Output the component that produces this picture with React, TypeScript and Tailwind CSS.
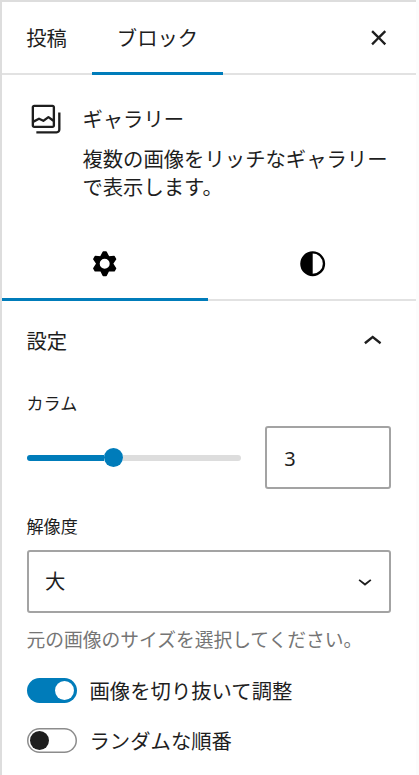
import { useState } from "react";
import type { ReactNode } from "react";
import clsx from "clsx";

const icons = {
    gallery: "M16.375 4.5H4.625a.125.125 0 0 0-.125.125v8.254l2.859-1.54a.75.75 0 0 1 .68-.016l2.384 1.142 2.89-2.074a.75.75 0 0 1 .874 0l2.313 1.66V4.625a.125.125 0 0 0-.125-.125Zm.125 9.398-2.75-1.975-2.813 2.02a.75.75 0 0 1-.76.067l-2.444-1.17L4.5 14.583v1.792c0 .069.056.125.125.125h11.75a.125.125 0 0 0 .125-.125v-2.477ZM4.625 3C3.728 3 3 3.728 3 4.625v11.75C3 17.273 3.728 18 4.625 18h11.75c.898 0 1.625-.727 1.625-1.625V4.625C18 3.728 17.273 3 16.375 3H4.625ZM20 8v11c0 .69-.31 1-.999 1H6v1.5h13.001c1.52 0 2.499-.982 2.499-2.5V8H20Z",
    cog: "M11.1 4.5h1.8l1.6 3.17 3.55-.2.9 1.56L17 12l1.95 2.97-.9 1.56-3.55-.2-1.6 3.17h-1.8l-1.6-3.17-3.55.2-.9-1.56L7 12 5.05 9.03l.9-1.56 3.55.2zM15.7 12a3.7 3.7 0 1 1-7.4 0 3.7 3.7 0 0 1 7.4 0z",
    styles: "M20 12a8 8 0 1 1-16 0 8 8 0 0 1 16 0Zm-1.5 0a6.5 6.5 0 0 1-6.5 6.5v-13a6.5 6.5 0 0 1 6.5 6.5Z",
    close: "M12 13.06l3.712 3.713 1.061-1.06L13.061 12l3.712-3.712-1.06-1.06L12 10.938 8.288 7.227l-1.061 1.06L10.939 12l-3.712 3.712 1.06 1.061L12 13.061z",
    up: "M6.5 12.4L12 8l5.5 4.4-.9 1.2L12 10l-4.5 3.6-1-1.2z",
    down: "M17.5 11.6L12 16l-5.5-4.4.9-1.2L12 14l4.5-3.6 1 1.2z",
};

function Icon({ name, className }: { name: keyof typeof icons; className: string }) {
    return (
        <svg viewBox="0 0 24 24" className={clsx("shrink-0 fill-current", className)} aria-hidden="true">
            <path fillRule="evenodd" clipRule="evenodd" d={icons[name]} />
        </svg>
    );
}

function Toggle({ on, onChange, children }: { on: boolean; onChange: () => void; children: ReactNode }) {
    return (
        <button role="switch" aria-checked={on} onClick={onChange} className="flex h-[25px] items-center gap-[13px] text-left">
            <span
                className={clsx(
                    "flex h-[25px] w-[50px] items-center rounded-full px-[3px]",
                    on ? "justify-end bg-[#007cba]" : "bg-white inset-ring-[1.5px] inset-ring-[#8c8c8c]"
                )}
            >
                <span className={clsx("size-[19px] rounded-full", on ? "bg-white" : "bg-[#1e1e1e]")} />
            </span>
            <span className="pb-[2px]">{children}</span>
        </button>
    );
}

export default function App() {
    const [crop, setCrop] = useState(true);
    const [random, setRandom] = useState(false);

    return (
        <div className="h-[775px] w-[419px] overflow-hidden bg-[#fcfcfc] pr-[3px] font-['Noto_Sans_CJK_JP',sans-serif] text-[20.35px] leading-[28px] text-[#1e1e1e]">
            <div className="h-full border-t-2 border-l-2 border-[#dddddd] bg-white">
                {/* Tabs */}
                <div className="flex h-[73px] inset-shadow-[0_-2px_0_#e2e2e2]">
                    <button className="w-[90px] pr-[1px] pb-[3px]">投稿</button>
                    <button className="w-[131px] pb-[3px] inset-shadow-[0_-3px_0_#007cba]">ブロック</button>
                    <button className="ml-auto pr-[19px] pb-[2px]" aria-label="閉じる">
                        <Icon name="close" className="size-[37.4px]" />
                    </button>
                </div>

                {/* Block card */}
                <div className="flex h-[145px] gap-[18.5px] pt-[25px] pl-[24.5px]">
                    <Icon name="gallery" className="size-[37.4px]" />
                    <div className="pt-[4px]">
                        <h2>ギャラリー</h2>
                        <p className="mt-[12px] w-[308px]">複数の画像をリッチなギャラリーで表示します。</p>
                    </div>
                </div>

                {/* Settings / styles */}
                <div className="grid h-[81px] grid-cols-[206px_208px] text-black inset-shadow-[0_-2px_0_#e2e2e2]">
                    <button className="flex items-center justify-center pt-[7px] inset-shadow-[0_-3px_0_#007cba]" aria-label="設定">
                        <Icon name="cog" className="size-[37.4px] stroke-current stroke-1 [stroke-linejoin:round]" />
                    </button>
                    <button className="flex items-center justify-center pt-[7px] pl-[1px]" aria-label="スタイル">
                        <Icon name="styles" className="size-[37.4px]" />
                    </button>
                </div>

                {/* Panel */}
                <div className="pr-[25px] pl-[24.5px]">
                    <div className="flex h-[81px] items-center justify-between">
                        <h2 className="pb-[3px]">設定</h2>
                        <Icon name="up" className="size-[37.4px]" />
                    </div>

                    <div className="mt-[8px] text-[17.1px] leading-[26px]">カラム</div>
                    <div className="mt-[10px] flex items-center gap-[24.5px]">
                        <div className="flex h-[19px] w-[214.5px] items-center">
                            <span className="h-[6px] w-[77.5px] rounded-l-full bg-[#007cba]" />
                            <span className="size-[19px] rounded-full bg-[#007cba]" />
                            <span className="h-[6px] flex-1 rounded-r-full bg-[#dddddd]" />
                        </div>
                        <div className="flex h-[63px] w-[126px] items-center rounded-[3px] border-2 border-[#a3a3a3] pt-[2px] pl-[17px] font-['Noto_Sans',sans-serif] text-[20px]">
                            3
                        </div>
                    </div>

                    <div className="mt-[24px] text-[17.1px] leading-[26px]">解像度</div>
                    <div className="mt-[11px] flex h-[63px] w-[364.5px] items-center justify-between rounded-[3px] border-2 border-[#a3a3a3] pr-[10px] pl-[16.5px]">
                        <span className="pb-[3px]">大</span>
                        <Icon name="down" className="-mt-[2px] size-[28px]" />
                    </div>
                    <p className="mt-[12px] text-[18.75px] leading-[28px] whitespace-nowrap text-[#757575]">元の画像のサイズを選択してください。</p>

                    <div className="mt-[25px] flex flex-col gap-[25px]">
                        <Toggle on={crop} onChange={() => setCrop(!crop)}>画像を切り抜いて調整</Toggle>
                        <Toggle on={random} onChange={() => setRandom(!random)}>ランダムな順番</Toggle>
                    </div>
                </div>
            </div>
        </div>
    );
}
